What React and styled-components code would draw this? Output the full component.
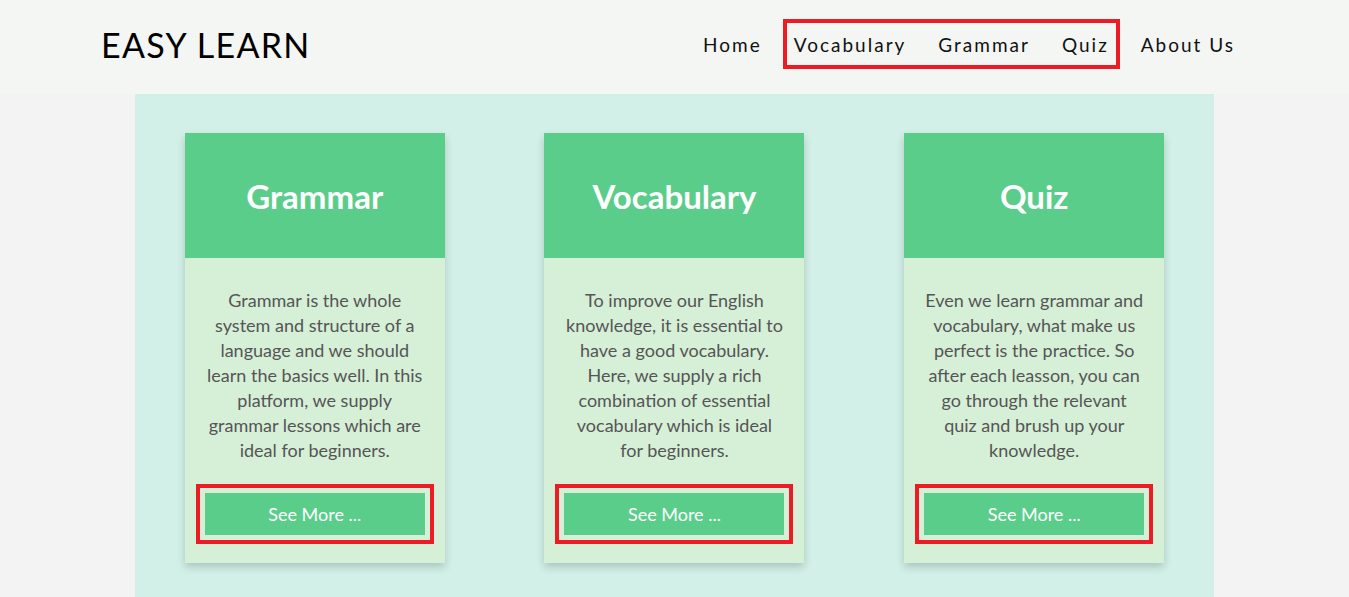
import React from "react";
import styled, { createGlobalStyle } from "styled-components";

const GlobalStyle = createGlobalStyle`
  body {
    margin: 0;
    background: #f3f3f3;
    font-family: Lato, "Open Sans", sans-serif;
  }
`;

const cards = [
  {
    title: "Grammar",
    text: "Grammar is the whole system and structure of a language and we should learn the basics well. In this platform, we supply grammar lessons which are ideal for beginners.",
  },
  {
    title: "Vocabulary",
    text: "To improve our English knowledge, it is essential to have a good vocabulary. Here, we supply a rich combination of essential vocabulary which is ideal for beginners.",
  },
  {
    title: "Quiz",
    text: "Even we learn grammar and vocabulary, what make us perfect is the practice. So after each leasson, you can go through the relevant quiz and brush up your knowledge.",
  },
];

export default function App() {
  return (
    <>
      <GlobalStyle />
      <Header>
        <Logo>EASY LEARN</Logo>
        <Nav>
          <NavLink href="#">Home</NavLink>
          <Highlight>
            <NavLink href="#">Vocabulary</NavLink>
            <NavLink href="#">Grammar</NavLink>
            <NavLink href="#">Quiz</NavLink>
          </Highlight>
          <NavLink href="#">About Us</NavLink>
        </Nav>
      </Header>
      <Section>
        {cards.map((card) => (
          <Card key={card.title}>
            <CardTitle>{card.title}</CardTitle>
            <CardBody>
              <CardText>{card.text}</CardText>
              <SeeMore>See More ...</SeeMore>
            </CardBody>
          </Card>
        ))}
      </Section>
    </>
  );
}

const Header = styled.header`
  height: 94px;
  box-sizing: border-box;
  background: #f4f6f3;
  display: flex;
  align-items: center;
  justify-content: space-between;
  padding: 0 114px 6px 101px;
`;

const Logo = styled.h1`
  margin: 0;
  font-family: Lato, sans-serif;
  font-weight: 400;
  font-size: 34px;
  letter-spacing: 1.3px;
  color: #000;
`;

const Nav = styled.nav`
  display: flex;
  align-items: center;
  gap: 21px;
`;

const Highlight = styled.div`
  display: flex;
  align-items: center;
  gap: 32px;
  height: 42px;
  padding: 0 7px;
  border: 4px solid #ed1c24;
`;

const NavLink = styled.a`
  font-size: 19px;
  letter-spacing: 2px;
  color: #111;
  text-decoration: none;
`;

const Section = styled.main`
  width: 80%;
  margin: 0 auto;
  min-height: 503px;
  background: #d2f0e7;
  display: flex;
  justify-content: space-around;
  align-items: flex-start;
  padding-top: 39px;
  box-sizing: border-box;
`;

const Card = styled.div`
  width: 260px;
  background: #d6efd7;
  box-shadow: 0 4px 8px rgba(0, 0, 0, 0.18);
`;

const CardTitle = styled.h2`
  margin: 0;
  height: 125px;
  display: flex;
  align-items: center;
  justify-content: center;
  background: #5bcd8b;
  color: #fff;
  font-size: 33px;
  font-weight: 700;
`;

const CardBody = styled.div`
  padding: 30px 20px 28px;
  display: flex;
  flex-direction: column;
  align-items: center;
`;

const CardText = styled.p`
  margin: 0 0 30px;
  font-size: 18px;
  line-height: 25px;
  color: #555;
  text-align: center;
`;

const SeeMore = styled.button`
  width: 220px;
  height: 42px;
  border: none;
  background: #5bcd8b;
  color: #fff;
  font-family: Lato, sans-serif;
  font-size: 18px;
  outline: 4px solid #ed1c24;
  outline-offset: 5px;
  cursor: pointer;
`;
